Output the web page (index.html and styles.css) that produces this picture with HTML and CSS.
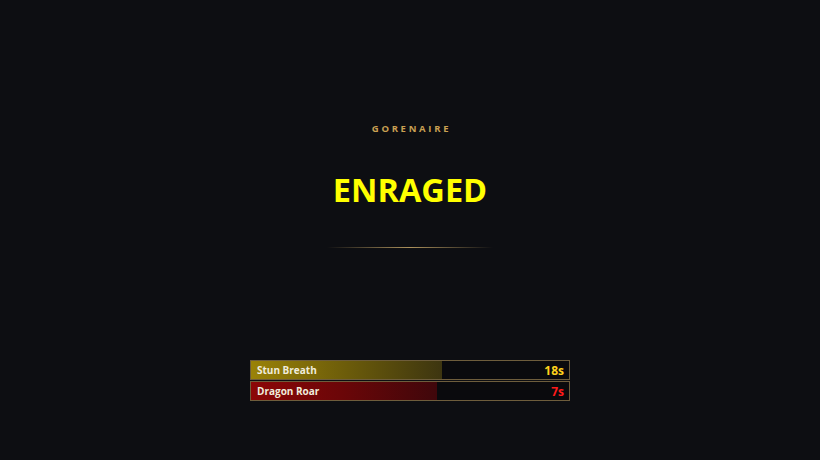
FILE: index.html
```html
<!DOCTYPE html>
<html>
<head>
<meta charset="utf-8">
<link rel="stylesheet" href="styles.css">
</head>
<body>
<div class="screen">
  <div class="banner">
    <div class="boss">GORENAIRE</div>
    <div class="state">ENRAGED</div>
    <div class="rule"></div>
  </div>
  <div class="timers">
    <div class="timer stun">
      <div class="fill" style="width: 60%"></div>
      <span class="name">Stun Breath</span>
      <span class="time">18s</span>
    </div>
    <div class="timer roar">
      <div class="fill" style="width: 58.5%"></div>
      <span class="name">Dragon Roar</span>
      <span class="time">7s</span>
    </div>
  </div>
</div>
</body>
</html>
```
FILE: styles.css
```css
html, body {
  margin: 0;
  padding: 0;
  background: #0d0e12;
}
.screen {
  width: 820px;
  height: 460px;
  display: flex;
  flex-direction: column;
  align-items: center;
  font-family: "Open Sans", "Noto Sans", sans-serif;
}
.banner {
  margin-top: 122px;
  display: flex;
  flex-direction: column;
  align-items: center;
}
.boss {
  font-size: 9.5px;
  font-weight: 700;
  letter-spacing: 2.7px;
  color: #c9a052;
  line-height: 14px;
  padding-left: 3px;
}
.state {
  margin-top: 34px;
  font-size: 32.5px;
  font-weight: 700;
  color: #ffff00;
  line-height: 40px;
}
.rule {
  margin-top: 37px;
  width: 166px;
  height: 1px;
  background: linear-gradient(90deg, rgba(201,160,82,0) 0%, rgba(190,160,100,0.9) 50%, rgba(201,160,82,0) 100%);
}
.timers {
  margin-top: 112px;
  width: 320px;
  display: flex;
  flex-direction: column;
  gap: 1px;
}
.timer {
  position: relative;
  height: 18px;
  border: 1px solid #6e5d3c;
  background: #0a0a0d;
  display: flex;
  align-items: center;
  justify-content: space-between;
  padding: 0 5px 0 6px;
  font-size: 10px;
  font-weight: 700;
}
.fill {
  position: absolute;
  left: 0;
  top: 0;
  bottom: 0;
}
.stun .fill {
  background: linear-gradient(90deg, #9a8208 0%, #6c5c0a 50%, #3d3510 100%);
}
.roar .fill {
  background: linear-gradient(90deg, #8c0707 0%, #6a0608 50%, #3f070b 100%);
}
.name {
  position: relative;
  color: #f0ecdc;
}
.time {
  position: relative;
  font-size: 12px;
}
.stun .time { color: #ffd21c; }
.roar .time { color: #ff1a1a; }
```
